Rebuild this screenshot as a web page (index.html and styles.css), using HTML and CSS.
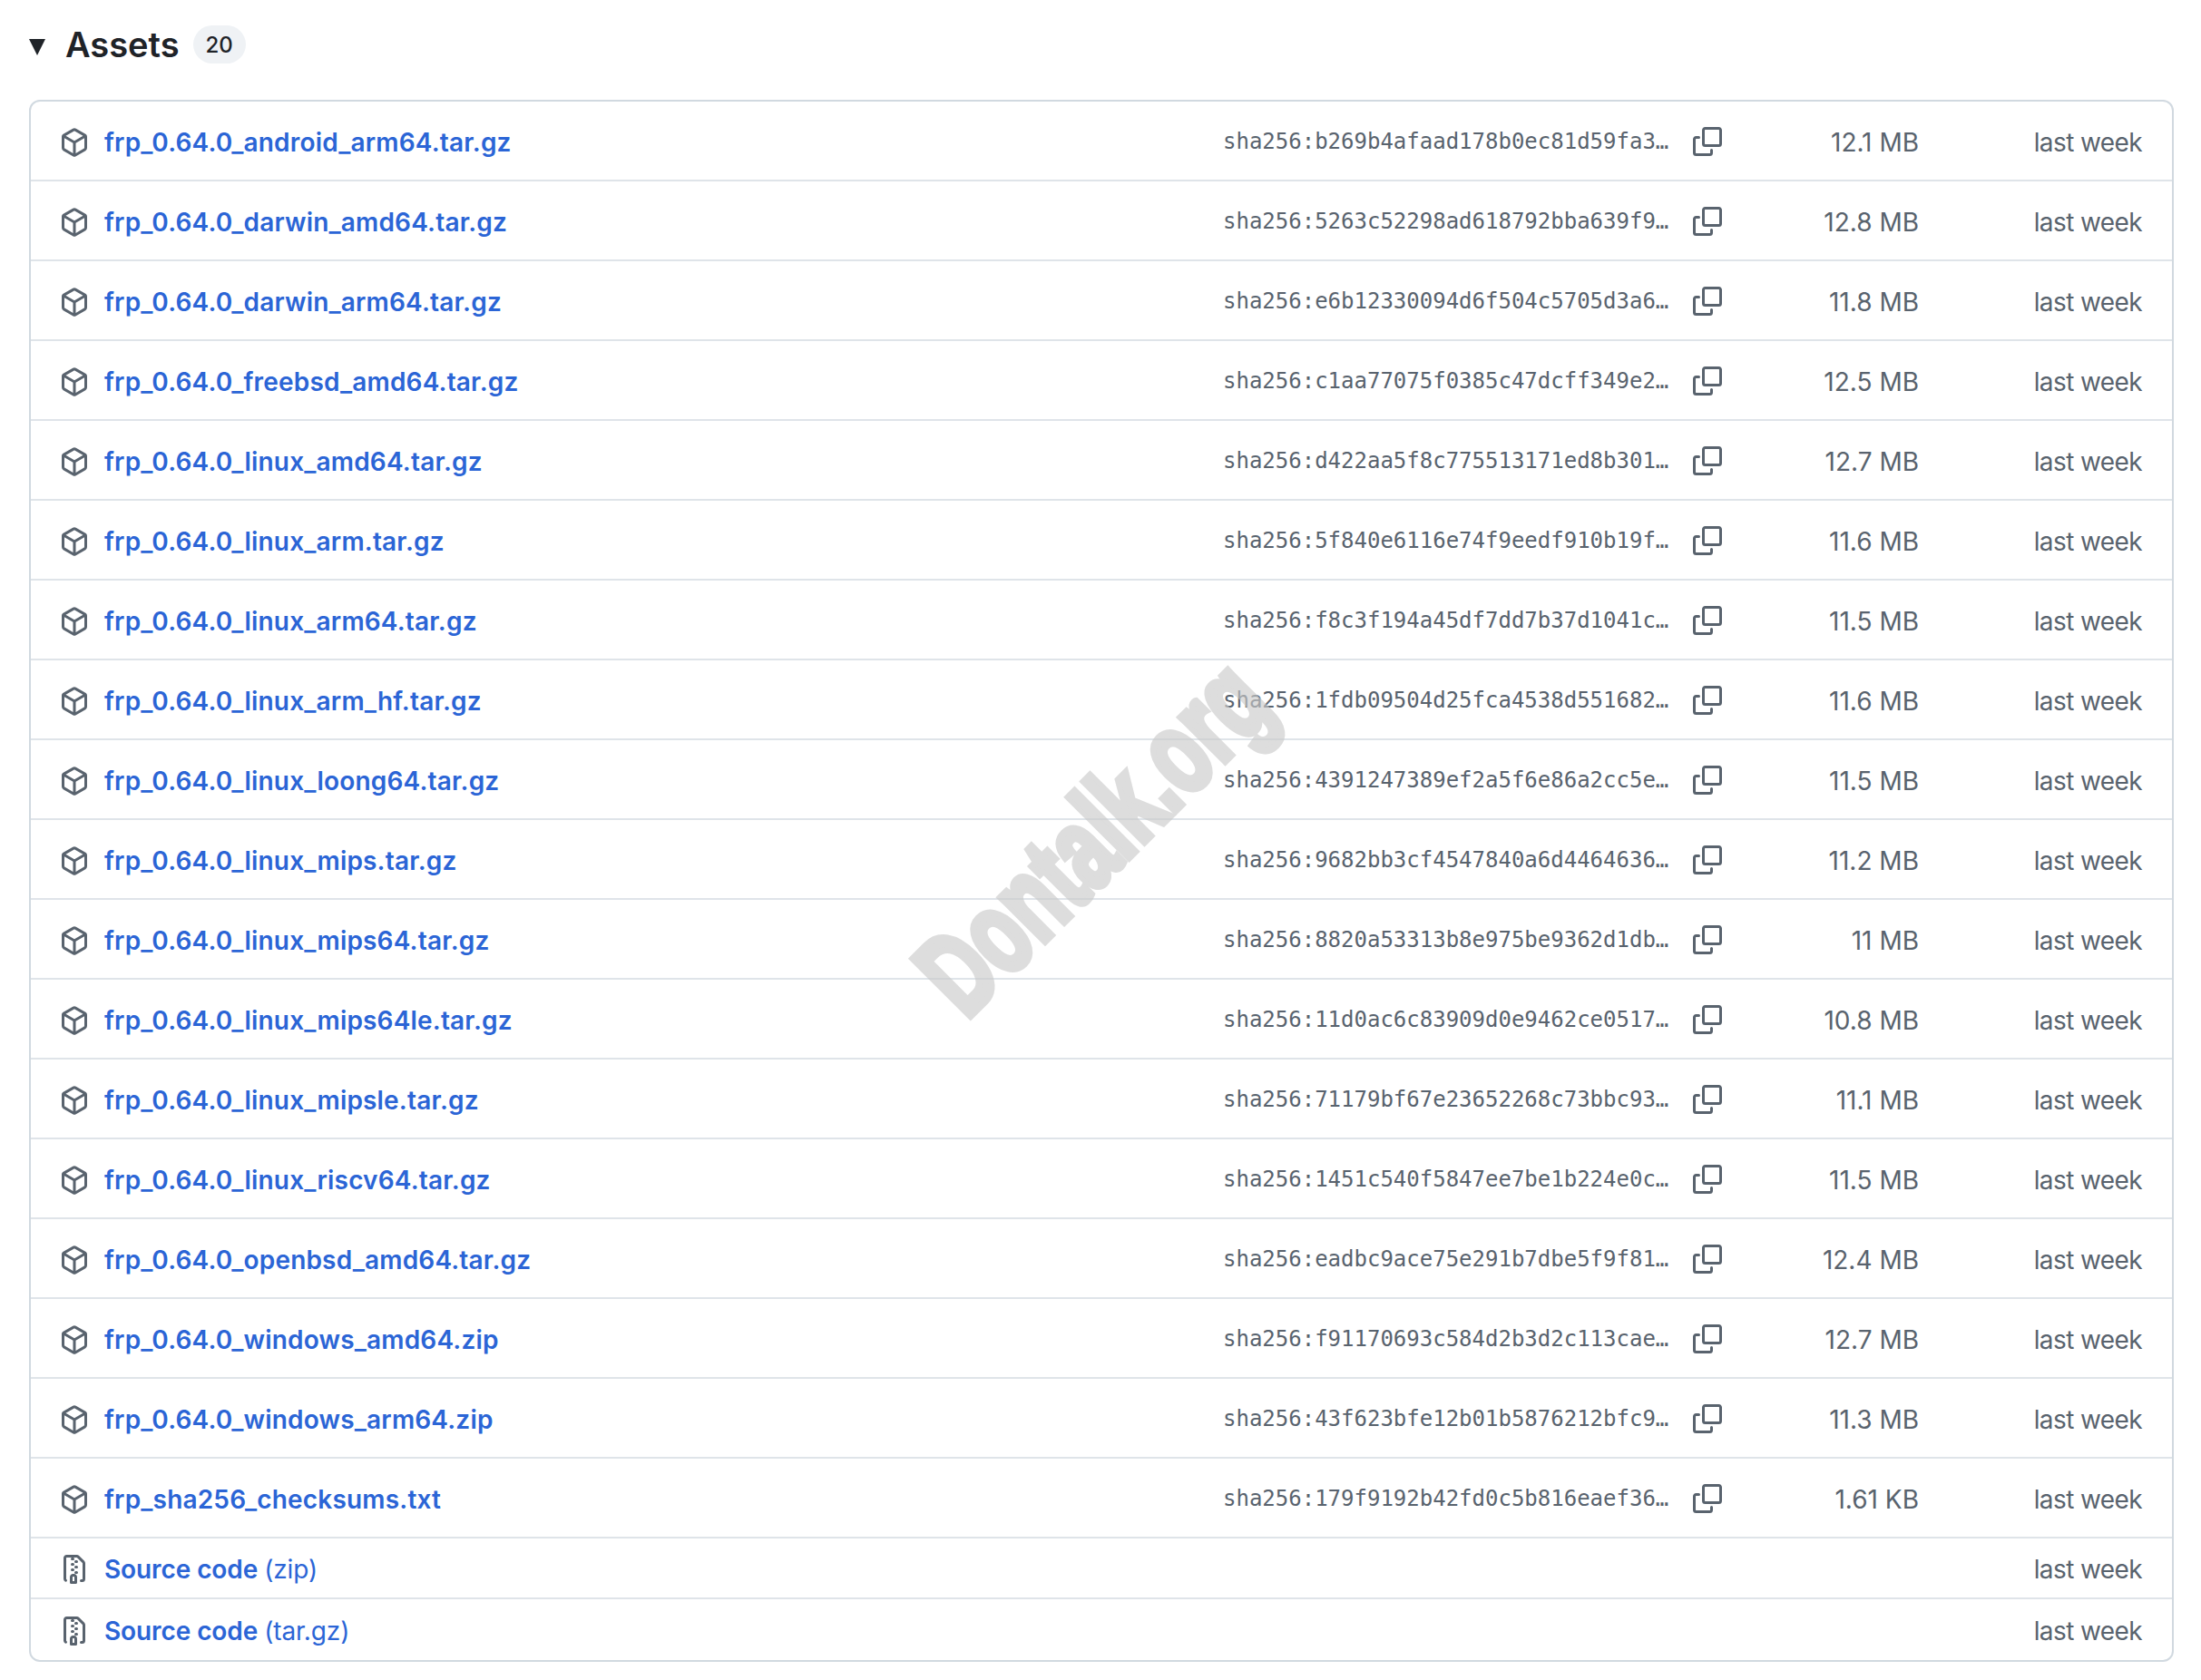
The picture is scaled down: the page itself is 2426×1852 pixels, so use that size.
FILE: index.html
```html
<!DOCTYPE html>
<html lang="en">
<head>
<meta charset="utf-8">
<title>Assets</title>
<link rel="stylesheet" href="styles.css">
</head>
<body>
<svg class="sprite" aria-hidden="true">
  <symbol id="pkg" viewBox="0 0 16 16"><path d="m8.878.392 5.25 3.045c.54.314.872.89.872 1.514v6.098a1.75 1.75 0 0 1-.872 1.514l-5.25 3.045a1.75 1.75 0 0 1-1.756 0l-5.25-3.045A1.75 1.75 0 0 1 1 11.049V4.951c0-.624.332-1.201.872-1.514L7.122.392a1.75 1.75 0 0 1 1.756 0ZM7.875 1.69l-4.63 2.685L8 7.133l4.755-2.758-4.63-2.685a.248.248 0 0 0-.25 0ZM2.5 5.677v5.372c0 .09.047.171.125.216l4.625 2.683V8.432Zm6.25 8.271 4.625-2.683a.25.25 0 0 0 .125-.216V5.677L8.75 8.432Z"/></symbol>
  <symbol id="copy" viewBox="0 0 16 16"><path d="M0 6.75C0 5.784.784 5 1.75 5h1.5a.75.75 0 0 1 0 1.5h-1.5a.25.25 0 0 0-.25.25v7.5c0 .138.112.25.25.25h7.5a.25.25 0 0 0 .25-.25v-1.5a.75.75 0 0 1 1.5 0v1.5A1.75 1.75 0 0 1 9.25 16h-7.5A1.75 1.75 0 0 1 0 14.25Z"/><path d="M5 1.75C5 .784 5.784 0 6.75 0h7.5C15.216 0 16 .784 16 1.75v7.5A1.75 1.75 0 0 1 14.25 11h-7.5A1.75 1.75 0 0 1 5 9.25Zm1.75-.25a.25.25 0 0 0-.25.25v7.5c0 .138.112.25.25.25h7.5a.25.25 0 0 0 .25-.25v-7.5a.25.25 0 0 0-.25-.25Z"/></symbol>
  <symbol id="zip" viewBox="0 0 16 16"><path d="M3.5 1.75v11.5c0 .09.048.173.126.217a.75.75 0 0 1-.752 1.298A1.748 1.748 0 0 1 2 13.25V1.75C2 .784 2.784 0 3.75 0h5.586c.464 0 .909.185 1.237.513l2.914 2.914c.329.328.513.773.513 1.237v8.586A1.75 1.75 0 0 1 12.25 15h-.5a.75.75 0 0 1 0-1.5h.5a.25.25 0 0 0 .25-.25V4.664a.25.25 0 0 0-.073-.177L9.513 1.573a.25.25 0 0 0-.177-.073H7.25a.75.75 0 0 1 0 1.5h-.5a.75.75 0 0 1 0-1.5h-3a.25.25 0 0 0-.25.25Zm3.75 8.75h.5c.966 0 1.75.784 1.75 1.75v3a.75.75 0 0 1-.75.75h-2.5a.75.75 0 0 1-.75-.75v-3c0-.966.784-1.75 1.75-1.75ZM6 5.25a.75.75 0 0 1 .75-.75h.5a.75.75 0 0 1 0 1.5h-.5A.75.75 0 0 1 6 5.25Zm.75 2.25h.5a.75.75 0 0 1 0 1.5h-.5a.75.75 0 0 1 0-1.5ZM8 6.75A.75.75 0 0 1 8.75 6h.5a.75.75 0 0 1 0 1.5h-.5A.75.75 0 0 1 8 6.75ZM8.75 3h.5a.75.75 0 0 1 0 1.5h-.5a.75.75 0 0 1 0-1.5ZM8 9.75A.75.75 0 0 1 8.75 9h.5a.75.75 0 0 1 0 1.5h-.5A.75.75 0 0 1 8 9.75Zm-1 2.5v2.25h1v-2.25a.25.25 0 0 0-.25-.25h-.5a.25.25 0 0 0-.25.25Z"/></symbol>
</svg>
<main class="assets">
  <header class="assets-head">
    <span class="caret"></span>
    <h2 class="assets-title">Assets</h2>
    <span class="counter">20</span>
  </header>
  <ul class="asset-list">
    <li class="row"><span class="name"><svg class="icon"><use href="#pkg"/></svg><a class="link">frp_0.64.0_android_arm64.tar.gz</a></span><span class="hash">sha256:b269b4afaad178b0ec81d59fa3…</span><svg class="copy"><use href="#copy"/></svg><span class="size">12.1 MB</span><span class="time">last week</span></li>
    <li class="row"><span class="name"><svg class="icon"><use href="#pkg"/></svg><a class="link">frp_0.64.0_darwin_amd64.tar.gz</a></span><span class="hash">sha256:5263c52298ad618792bba639f9…</span><svg class="copy"><use href="#copy"/></svg><span class="size">12.8 MB</span><span class="time">last week</span></li>
    <li class="row"><span class="name"><svg class="icon"><use href="#pkg"/></svg><a class="link">frp_0.64.0_darwin_arm64.tar.gz</a></span><span class="hash">sha256:e6b12330094d6f504c5705d3a6…</span><svg class="copy"><use href="#copy"/></svg><span class="size">11.8 MB</span><span class="time">last week</span></li>
    <li class="row"><span class="name"><svg class="icon"><use href="#pkg"/></svg><a class="link">frp_0.64.0_freebsd_amd64.tar.gz</a></span><span class="hash">sha256:c1aa77075f0385c47dcff349e2…</span><svg class="copy"><use href="#copy"/></svg><span class="size">12.5 MB</span><span class="time">last week</span></li>
    <li class="row"><span class="name"><svg class="icon"><use href="#pkg"/></svg><a class="link">frp_0.64.0_linux_amd64.tar.gz</a></span><span class="hash">sha256:d422aa5f8c775513171ed8b301…</span><svg class="copy"><use href="#copy"/></svg><span class="size">12.7 MB</span><span class="time">last week</span></li>
    <li class="row"><span class="name"><svg class="icon"><use href="#pkg"/></svg><a class="link">frp_0.64.0_linux_arm.tar.gz</a></span><span class="hash">sha256:5f840e6116e74f9eedf910b19f…</span><svg class="copy"><use href="#copy"/></svg><span class="size">11.6 MB</span><span class="time">last week</span></li>
    <li class="row"><span class="name"><svg class="icon"><use href="#pkg"/></svg><a class="link">frp_0.64.0_linux_arm64.tar.gz</a></span><span class="hash">sha256:f8c3f194a45df7dd7b37d1041c…</span><svg class="copy"><use href="#copy"/></svg><span class="size">11.5 MB</span><span class="time">last week</span></li>
    <li class="row"><span class="name"><svg class="icon"><use href="#pkg"/></svg><a class="link">frp_0.64.0_linux_arm_hf.tar.gz</a></span><span class="hash">sha256:1fdb09504d25fca4538d551682…</span><svg class="copy"><use href="#copy"/></svg><span class="size">11.6 MB</span><span class="time">last week</span></li>
    <li class="row"><span class="name"><svg class="icon"><use href="#pkg"/></svg><a class="link">frp_0.64.0_linux_loong64.tar.gz</a></span><span class="hash">sha256:4391247389ef2a5f6e86a2cc5e…</span><svg class="copy"><use href="#copy"/></svg><span class="size">11.5 MB</span><span class="time">last week</span></li>
    <li class="row"><span class="name"><svg class="icon"><use href="#pkg"/></svg><a class="link">frp_0.64.0_linux_mips.tar.gz</a></span><span class="hash">sha256:9682bb3cf4547840a6d4464636…</span><svg class="copy"><use href="#copy"/></svg><span class="size">11.2 MB</span><span class="time">last week</span></li>
    <li class="row"><span class="name"><svg class="icon"><use href="#pkg"/></svg><a class="link">frp_0.64.0_linux_mips64.tar.gz</a></span><span class="hash">sha256:8820a53313b8e975be9362d1db…</span><svg class="copy"><use href="#copy"/></svg><span class="size">11 MB</span><span class="time">last week</span></li>
    <li class="row"><span class="name"><svg class="icon"><use href="#pkg"/></svg><a class="link">frp_0.64.0_linux_mips64le.tar.gz</a></span><span class="hash">sha256:11d0ac6c83909d0e9462ce0517…</span><svg class="copy"><use href="#copy"/></svg><span class="size">10.8 MB</span><span class="time">last week</span></li>
    <li class="row"><span class="name"><svg class="icon"><use href="#pkg"/></svg><a class="link">frp_0.64.0_linux_mipsle.tar.gz</a></span><span class="hash">sha256:71179bf67e23652268c73bbc93…</span><svg class="copy"><use href="#copy"/></svg><span class="size">11.1 MB</span><span class="time">last week</span></li>
    <li class="row"><span class="name"><svg class="icon"><use href="#pkg"/></svg><a class="link">frp_0.64.0_linux_riscv64.tar.gz</a></span><span class="hash">sha256:1451c540f5847ee7be1b224e0c…</span><svg class="copy"><use href="#copy"/></svg><span class="size">11.5 MB</span><span class="time">last week</span></li>
    <li class="row"><span class="name"><svg class="icon"><use href="#pkg"/></svg><a class="link">frp_0.64.0_openbsd_amd64.tar.gz</a></span><span class="hash">sha256:eadbc9ace75e291b7dbe5f9f81…</span><svg class="copy"><use href="#copy"/></svg><span class="size">12.4 MB</span><span class="time">last week</span></li>
    <li class="row"><span class="name"><svg class="icon"><use href="#pkg"/></svg><a class="link">frp_0.64.0_windows_amd64.zip</a></span><span class="hash">sha256:f91170693c584d2b3d2c113cae…</span><svg class="copy"><use href="#copy"/></svg><span class="size">12.7 MB</span><span class="time">last week</span></li>
    <li class="row"><span class="name"><svg class="icon"><use href="#pkg"/></svg><a class="link">frp_0.64.0_windows_arm64.zip</a></span><span class="hash">sha256:43f623bfe12b01b5876212bfc9…</span><svg class="copy"><use href="#copy"/></svg><span class="size">11.3 MB</span><span class="time">last week</span></li>
    <li class="row"><span class="name"><svg class="icon"><use href="#pkg"/></svg><a class="link">frp_sha256_checksums.txt</a></span><span class="hash">sha256:179f9192b42fd0c5b816eaef36…</span><svg class="copy"><use href="#copy"/></svg><span class="size">1.61 KB</span><span class="time">last week</span></li>
    <li class="row row-src"><span class="name"><svg class="icon"><use href="#zip"/></svg><a class="link link-src">Source code</a><span class="ext">(zip)</span></span><span class="time">last week</span></li>
    <li class="row row-src"><span class="name"><svg class="icon"><use href="#zip"/></svg><a class="link link-src">Source code</a><span class="ext">(tar.gz)</span></span><span class="time">last week</span></li>
  </ul>
  <div class="watermark">Dontalk.org</div>
</main>
</body>
</html>
```

FILE: styles.css
```css
* { box-sizing: border-box; }
html, body { margin: 0; padding: 0; background: #fff; }
body {
  font-family: Inter, "Liberation Sans", sans-serif;
  color: #1f2328;
  width: 2426px;
  height: 1852px;
  overflow: hidden;
}
.sprite { display: none; }
.assets { position: relative; padding: 27px 30px 0 32px; }
.assets-head { display: flex; align-items: center; height: 44px; margin-bottom: 39px; }
.caret {
  width: 0; height: 0;
  margin: 6px 22px 0 0;
  border-left: 9px solid transparent;
  border-right: 9px solid transparent;
  border-top: 18px solid #1f2328;
}
.assets-title { margin: 0; font-size: 38px; font-weight: 600; line-height: 44px; }
.counter {
  margin-left: 15px;
  min-width: 58px; height: 42px;
  display: flex; align-items: center; justify-content: center;
  background: #eff2f5;
  border-radius: 21px;
  font-size: 24px; font-weight: 500;
}
.asset-list {
  list-style: none; margin: 0; padding: 0;
  border: 2px solid #d1d9e0;
  border-radius: 12px;
}
.row {
  display: grid;
  grid-template-columns: 1fr 492px 58px 217px 246px;
  align-items: center;
  height: 88px;
  padding: 3px 33px 0 0;
  border-bottom: 2px solid #dfe4e9;
  font-size: 28px;
  color: #59636e;
}
.row:last-child { border-bottom: 0; }
.row-src { grid-template-columns: 1fr 246px; height: 67px; padding-top: 2px; }
.name { display: flex; align-items: center; padding-left: 32px; }
.icon { width: 32px; height: 32px; fill: #59636e; margin-right: 17px; flex: none; }
.link { color: #2b65d6; font-weight: 600; letter-spacing: .18px; }
.link-src { letter-spacing: -.1px; }
.ext { color: #2b65d6; margin-left: 7px; letter-spacing: -.1px; }
.hash { font-family: "DejaVu Sans Mono", monospace; font-size: 24px; white-space: nowrap; margin-bottom: 1px; }
.copy { width: 32px; height: 32px; fill: #59636e; margin: 0 0 1px 26px; }
.size { text-align: right; }
.time { text-align: right; letter-spacing: -.6px; }
.watermark {
  position: absolute;
  left: 1204px; top: 922px;
  transform: translate(-50%, -50%) rotate(-45deg) scaleX(.67);
  font-family: "Liberation Sans", sans-serif;
  font-weight: 700;
  font-size: 130px;
  line-height: 1;
  white-space: nowrap;
  color: #cacaca;
  -webkit-text-stroke: 8px #cacaca;
  opacity: .63;
  pointer-events: none;
}
```
